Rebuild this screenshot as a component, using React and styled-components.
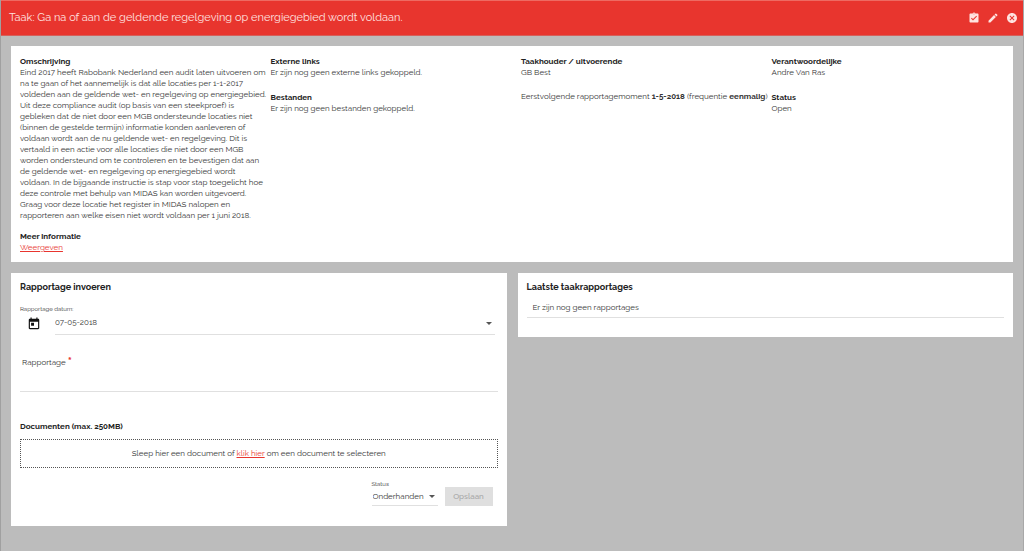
import React, { useState } from 'react';
import styled, { createGlobalStyle, css } from 'styled-components';

const GlobalStyle = createGlobalStyle`
  *, *::before, *::after {
    box-sizing: border-box;
  }
  body {
    margin: 0;
    background: #bcbcbc;
    color: #333;
    font-family: Raleway, Lato, 'Open Sans', sans-serif;
    font-size: 8px;
    line-height: 11px;
  }
  h1, h2, h3, p {
    margin: 0;
  }
  button, input, select, textarea {
    font: inherit;
    color: inherit;
  }
`;

const Dialog = styled.div`
  min-height: 100vh;
  border-left: 1px solid #a0a0a0;
  border-right: 1px solid #a8a8a8;
`;

const Header = styled.header`
  display: flex;
  align-items: center;
  justify-content: space-between;
  height: 36px;
  padding: 0 5px 0 8px;
  background: #e8352e;
  border-top: 1px solid #ee6a62;
  border-bottom: 1px solid #d5605b;
  color: #ffe3e0;
`;

const Title = styled.h1`
  font-size: 11px;
  line-height: 16px;
  font-weight: 400;
`;

const Actions = styled.div`
  display: flex;
  gap: 7px;
`;

const IconButton = styled.button`
  display: flex;
  padding: 0;
  border: 0;
  background: none;
  cursor: pointer;
`;

const Icon = styled.svg`
  display: block;
  width: ${({ $size }) => $size || 12}px;
  height: ${({ $size }) => $size || 12}px;
  fill: currentColor;
`;

const Content = styled.main`
  display: grid;
  grid-template-columns: repeat(2, minmax(0, 1fr));
  align-items: start;
  gap: 11px;
  padding: 10px 10px 25px;
`;

const Card = styled.section`
  background: #fff;
  padding: 8px 9px;
`;

const Details = styled(Card)`
  grid-column: 1 / -1;
  display: grid;
  grid-template-columns: repeat(4, minmax(0, 1fr));
  padding: 9px 0;
`;

const Column = styled.div`
  display: flex;
  flex-direction: column;
  gap: ${({ $tight }) => ($tight ? 9 : 13)}px;
  padding-left: 9px;
`;

const Label = styled.h3`
  font-size: 8px;
  line-height: 12px;
  font-weight: 700;
  color: #222;
`;

const Description = styled.p`
  white-space: pre;
`;

const Moment = styled.p`
  white-space: nowrap;
`;

const Link = styled.a`
  color: #e8352e;
  text-decoration: underline;
`;

const CardTitle = styled.h2`
  font-size: 9px;
  line-height: 12px;
  font-weight: 700;
  color: #222;
`;

const SmallLabel = styled.label`
  display: block;
  font-size: 6px;
  line-height: 8px;
`;

const DateField = styled.div`
  display: flex;
  align-items: flex-end;
  padding-right: 3px;
`;

const DateButton = styled(IconButton)`
  padding: 4px 14px 4px 7px;
  color: #111;
`;

const underline = css`
  border: 0;
  border-bottom: 1px solid #e0e0e0;
  background: none;
  outline: 0;
`;

const DateInputWrap = styled.div`
  ${underline}
  flex: 1;
  display: flex;
  align-items: center;
  height: 22px;
  padding-right: 3px;
`;

const DateInput = styled.input`
  flex: 1;
  min-width: 0;
  padding: 0 0 3px;
  border: 0;
  background: none;
  outline: 0;
`;

const Caret = styled.span`
  width: 0;
  border: 3px solid transparent;
  border-top-color: #555;
  border-bottom: 0;
`;

const ReportForm = styled(Card)`
  ${CardTitle} {
    margin-bottom: 12px;
  }
`;

const ReportLabel = styled.label`
  display: flex;
  gap: 2px;
  margin-top: 22px;
  padding-left: 2px;
`;

const Required = styled.span`
  color: #e8352e;
  font-size: 12px;
  font-weight: 700;
`;

const ReportText = styled.textarea`
  ${underline}
  display: block;
  width: 100%;
  height: 24px;
  padding: 4px 2px;
  resize: none;
`;

const DocumentsLabel = styled(Label)`
  margin-top: 28px;
`;

const DropZone = styled.div`
  margin-top: 7px;
  padding: 8px;
  border: 1px dotted #555;
  text-align: center;
`;

const Footer = styled.div`
  display: flex;
  justify-content: flex-end;
  align-items: flex-end;
  gap: 7px;
  margin-top: 12px;
  padding: 0 5px 12px;
`;

const StatusField = styled.div`
  width: 66px;
`;

const SelectWrap = styled.div`
  ${underline}
  display: flex;
  align-items: center;
  height: 18px;
  padding: 0 3px 0 1px;
`;

const Select = styled.select`
  flex: 1;
  min-width: 0;
  padding: 0;
  border: 0;
  background: none;
  appearance: none;
  outline: 0;
`;

const SaveButton = styled.button`
  width: 48px;
  height: 19px;
  padding: 0;
  border: 0;
  background: #dfdfdf;
  color: #a6a6a6;
  font-weight: 500;
`;

const ReportList = styled.ul`
  margin: 9px 0 11px;
  padding: 0;
  list-style: none;
`;

const ReportItem = styled.li`
  padding: 0 6px 4px;
  border-bottom: 1px solid #e0e0e0;
`;

const description = `Eind 2017 heeft Rabobank Nederland een audit laten uitvoeren om
na te gaan of het aannemelijk is dat alle locaties per 1-1-2017
voldeden aan de geldende wet- en regelgeving op energiegebied.
Uit deze compliance audit (op basis van een steekproef) is
gebleken dat de niet door een MGB ondersteunde locaties niet
(binnen de gestelde termijn) informatie konden aanleveren of
voldaan wordt aan de nu geldende wet- en regelgeving. Dit is
vertaald in een actie voor alle locaties die niet door een MGB
worden ondersteund om te controleren en te bevestigen dat aan
de geldende wet- en regelgeving op energiegebied wordt
voldaan. In de bijgaande instructie is stap voor stap toegelicht hoe
deze controle met behulp van MIDAS kan worden uitgevoerd.
Graag voor deze locatie het register in MIDAS nalopen en
rapporteren aan welke eisen niet wordt voldaan per 1 juni 2018.`;

const Info = ({ label, children }) => (
  <div>
    <Label>{label}</Label>
    {children}
  </div>
);

const App = () => {
  const [date, setDate] = useState('07-05-2018');
  const [report, setReport] = useState('');
  const [status, setStatus] = useState('Onderhanden');

  return (
    <>
      <GlobalStyle />
      <Dialog role="dialog" aria-labelledby="dialog-title">
        <Header>
          <Title id="dialog-title">
            Taak: Ga na of aan de geldende regelgeving op energiegebied wordt
            voldaan.
          </Title>
          <Actions>
            <IconButton aria-label="Afronden">
              <Icon viewBox="0 0 24 24" color="#ffe3e0">
                <path d="M19 3h-4.18C14.4 1.84 13.3 1 12 1c-1.3 0-2.4.84-2.82 2H5c-1.1 0-2 .9-2 2v14c0 1.1.9 2 2 2h14c1.1 0 2-.9 2-2V5c0-1.1-.9-2-2-2zm-7 0c.55 0 1 .45 1 1s-.45 1-1 1-1-.45-1-1 .45-1 1-1zm-2 14l-4-4 1.41-1.41L10 14.17l6.59-6.59L18 9l-8 8z" />
              </Icon>
            </IconButton>
            <IconButton aria-label="Bewerken">
              <Icon viewBox="0 0 24 24" color="#ffe3e0">
                <path d="M3 17.25V21h3.75L17.81 9.94l-3.75-3.75L3 17.25zM20.71 7.04c.39-.39.39-1.02 0-1.41l-2.34-2.34c-.39-.39-1.02-.39-1.41 0l-1.83 1.83 3.75 3.75 1.83-1.83z" />
              </Icon>
            </IconButton>
            <IconButton aria-label="Sluiten">
              <Icon viewBox="0 0 24 24" color="#ffe3e0">
                <path d="M12 2C6.47 2 2 6.47 2 12s4.47 10 10 10 10-4.47 10-10S17.53 2 12 2zm5 13.59L15.59 17 12 13.41 8.41 17 7 15.59 10.59 12 7 8.41 8.41 7 12 10.59 15.59 7 17 8.41 13.41 12 17 15.59z" />
              </Icon>
            </IconButton>
          </Actions>
        </Header>

        <Content>
          <Details>
            <Column $tight>
              <Info label="Omschrijving">
                <Description>{description}</Description>
              </Info>
              <Info label="Meer informatie">
                <Link href="#informatie">Weergeven</Link>
              </Info>
            </Column>
            <Column>
              <Info label="Externe links">
                <p>Er zijn nog geen externe links gekoppeld.</p>
              </Info>
              <Info label="Bestanden">
                <p>Er zijn nog geen bestanden gekoppeld.</p>
              </Info>
            </Column>
            <Column>
              <Info label="Taakhouder / uitvoerende">
                <p>GB Best</p>
              </Info>
              <Moment>
                Eerstvolgende rapportagemoment <b>1-5-2018</b> (frequentie{' '}
                <b>eenmalig</b>)
              </Moment>
            </Column>
            <Column>
              <Info label="Verantwoordelijke">
                <p>Andre Van Ras</p>
              </Info>
              <Info label="Status">
                <p>Open</p>
              </Info>
            </Column>
          </Details>

          <ReportForm as="form" onSubmit={(e) => e.preventDefault()}>
            <CardTitle>Rapportage invoeren</CardTitle>
            <SmallLabel htmlFor="date">Rapportage datum:</SmallLabel>
            <DateField>
              <DateButton type="button" aria-label="Kies datum">
                <Icon viewBox="0 0 24 24" $size={14}>
                  <path d="M19 3h-1V1h-2v2H8V1H6v2H5c-1.11 0-1.99.9-1.99 2L3 19c0 1.1.89 2 2 2h14c1.1 0 2-.9 2-2V5c0-1.1-.9-2-2-2zm0 16H5V8h14v11zM7 10h5v5H7z" />
                </Icon>
              </DateButton>
              <DateInputWrap>
                <DateInput
                  id="date"
                  value={date}
                  onChange={(e) => setDate(e.target.value)}
                />
                <Caret />
              </DateInputWrap>
            </DateField>
            <ReportLabel htmlFor="report">
              Rapportage
              <Required>*</Required>
            </ReportLabel>
            <ReportText
              id="report"
              value={report}
              onChange={(e) => setReport(e.target.value)}
            />
            <DocumentsLabel>Documenten (max. 250MB)</DocumentsLabel>
            <DropZone>
              Sleep hier een document of <Link href="#upload">klik hier</Link>{' '}
              om een document te selecteren
            </DropZone>
            <Footer>
              <StatusField>
                <SmallLabel htmlFor="status">Status</SmallLabel>
                <SelectWrap>
                  <Select
                    id="status"
                    value={status}
                    onChange={(e) => setStatus(e.target.value)}
                  >
                    <option>Onderhanden</option>
                    <option>Gereed</option>
                  </Select>
                  <Caret />
                </SelectWrap>
              </StatusField>
              <SaveButton disabled>Opslaan</SaveButton>
            </Footer>
          </ReportForm>

          <Card>
            <CardTitle>Laatste taakrapportages</CardTitle>
            <ReportList>
              <ReportItem>Er zijn nog geen rapportages</ReportItem>
            </ReportList>
          </Card>
        </Content>
      </Dialog>
    </>
  );
};

export default App;
